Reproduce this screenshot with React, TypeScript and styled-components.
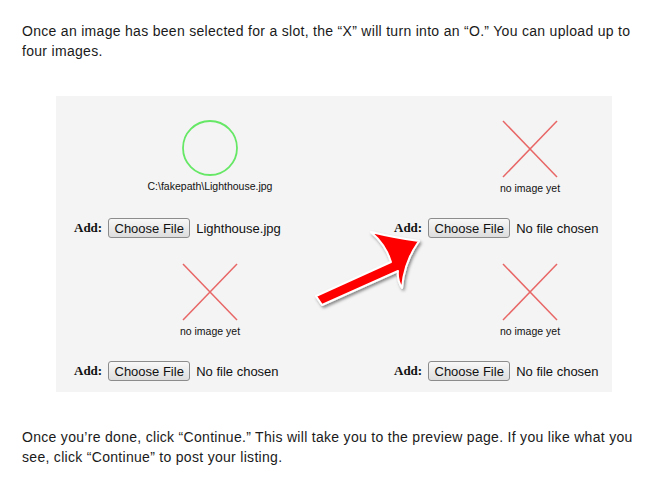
import React from "react";
import styled, { createGlobalStyle } from "styled-components";

const Global = createGlobalStyle`
  html, body { margin: 0; padding: 0; background: #ffffff; }
  body { font-family: Arial, "Liberation Sans", sans-serif; color: #1a1a1a; }
`;

const Page = styled.div`
  width: 652px;
  height: 484px;
  box-sizing: border-box;
  padding: 21px 20px 0 22px;
  overflow: hidden;
`;

const Paragraph = styled.p<{ $top?: number }>`
  margin: ${(p) => p.$top ?? 0}px 0 0 0;
  font-size: 14px;
  line-height: 20px;
  letter-spacing: 0.3px;
  width: 614px;
`;

const Panel = styled.div`
  position: relative;
  margin: 35px 0 0 34px;
  width: 556px;
  height: 296px;
  box-sizing: border-box;
  background: #f4f4f4;
  padding: 24px 0 0 18px;
  display: grid;
  grid-template-columns: 272px 272px;
  column-gap: 48px;
  row-gap: 25px;
  align-content: start;
`;

const Cell = styled.div`
  display: flex;
  flex-direction: column;
  width: 272px;
`;

const Preview = styled.div`
  display: flex;
  flex-direction: column;
  align-items: center;
`;

const Caption = styled.div<{ $gap: number }>`
  margin-top: ${(p) => p.$gap}px;
  font-size: 10.5px;
  line-height: 12px;
  color: #111;
`;

const AddRow = styled.div<{ $gap: number }>`
  margin-top: ${(p) => p.$gap}px;
  display: flex;
  align-items: center;
  gap: 6px;
  height: 20px;
  white-space: nowrap;
`;

const AddLabel = styled.span`
  font-family: "Liberation Serif", "Times New Roman", serif;
  font-weight: bold;
  font-size: 13px;
  color: #111;
`;

const FileButton = styled.span`
  display: inline-flex;
  align-items: center;
  justify-content: center;
  width: 82px;
  height: 20px;
  box-sizing: border-box;
  border: 1px solid #8c8c8c;
  border-radius: 3px;
  background: linear-gradient(#f8f8f8, #dddddd);
  font-size: 13px;
  color: #111;
`;

const FileName = styled.span`
  font-size: 13px;
  color: #111;
`;

const ArrowLayer = styled.svg`
  position: absolute;
  left: 0;
  top: 0;
  pointer-events: none;
  overflow: visible;
`;

type Slot = { chosen?: string; path?: string };

const slots: Slot[] = [
  { chosen: "Lighthouse.jpg", path: "C:\\fakepath\\Lighthouse.jpg" },
  {},
  {},
  {},
];

const Circle = () => (
  <svg width="58" height="58" viewBox="0 0 58 58">
    <circle cx="29" cy="28" r="27" fill="none" stroke="#66e866" strokeWidth="1.8" />
  </svg>
);

const Cross = () => (
  <svg width="58" height="58" viewBox="0 0 58 58">
    <line x1="2" y1="1" x2="56" y2="57" stroke="#e86666" strokeWidth="1.5" />
    <line x1="56" y1="1" x2="2" y2="57" stroke="#e86666" strokeWidth="1.5" />
  </svg>
);

export default function App() {
  return (
    <>
      <Global />
      <Page>
        <Paragraph>
          Once an image has been selected for a slot, the “X” will turn into an “O.” You can upload up to
          four images.
        </Paragraph>
        <Panel>
          {slots.map((s, i) => (
            <Cell key={i}>
              <Preview>
                {s.chosen ? <Circle /> : <Cross />}
                <Caption $gap={s.chosen ? 2 : 4}>{s.path ?? "no image yet"}</Caption>
              </Preview>
              <AddRow $gap={s.chosen ? 26 : 24}>
                <AddLabel>Add:</AddLabel>
                <FileButton>Choose File</FileButton>
                <FileName>{s.chosen ?? "No file chosen"}</FileName>
              </AddRow>
            </Cell>
          ))}
          <ArrowLayer width="556" height="296" viewBox="56 96 556 296">
            <defs>
              <filter id="sh" x="-20%" y="-20%" width="140%" height="140%">
                <feDropShadow dx="1.5" dy="2" stdDeviation="1.6" floodColor="#000" floodOpacity="0.45" />
              </filter>
            </defs>
            <path
              d="M 316 296 L 391 262 Q 386 245 371 232 Q 396 238 419 241 Q 404 262 402 288 Q 397 280 398 271 L 322 305 Z"
              fill="#ff0000"
              stroke="#ffffff"
              strokeWidth="2"
              strokeLinejoin="round"
              filter="url(#sh)"
            />
          </ArrowLayer>
        </Panel>
        <Paragraph $top={35}>
          Once you’re done, click “Continue.” This will take you to the preview page. If you like what you
          see, click “Continue” to post your listing.
        </Paragraph>
      </Page>
    </>
  );
}
